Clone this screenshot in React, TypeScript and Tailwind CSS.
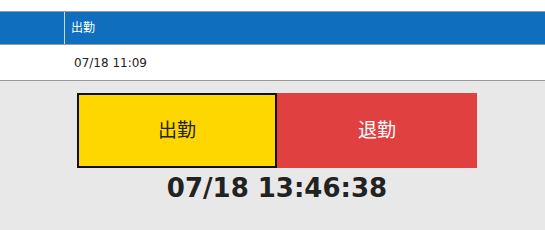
import React from "react";

const font = { fontFamily: '"DejaVu Sans", "Noto Sans CJK JP", sans-serif' };

export default function App() {
  return (
    <div className="w-[545px] h-[230px] bg-[#e8e8e8] flex flex-col" style={font}>
      <div className="h-[11px] bg-white" />
      <div className="bg-white border-y border-[#9a9a9a]">
        <div className="flex h-[32px] bg-[#106ebe] text-white text-[12px]">
          <div className="w-[65px] border-r border-[#c8d8ea]" />
          <div className="flex items-center pl-[6px]">出勤</div>
        </div>
      </div>
      <div className="flex h-[36px] bg-white border-b border-[#9a9a9a] text-[12px] text-[#222]">
        <div className="w-[74px]" />
        <div className="flex items-center">07/18 11:09</div>
      </div>
      <div className="flex flex-col items-center pl-[9px]">
        <div className="flex mt-[12px]">
          <button className="w-[200px] h-[75px] bg-[#ffd700] border-2 border-[#111] text-[19px] text-[#222]">
            出勤
          </button>
          <button className="w-[200px] h-[75px] bg-[#e04040] text-[19px] text-white">
            退勤
          </button>
        </div>
        <div className="text-center text-[26px] font-bold text-[#222] leading-none mt-[7px]">
          07/18 13:46:38
        </div>
      </div>
    </div>
  );
}
